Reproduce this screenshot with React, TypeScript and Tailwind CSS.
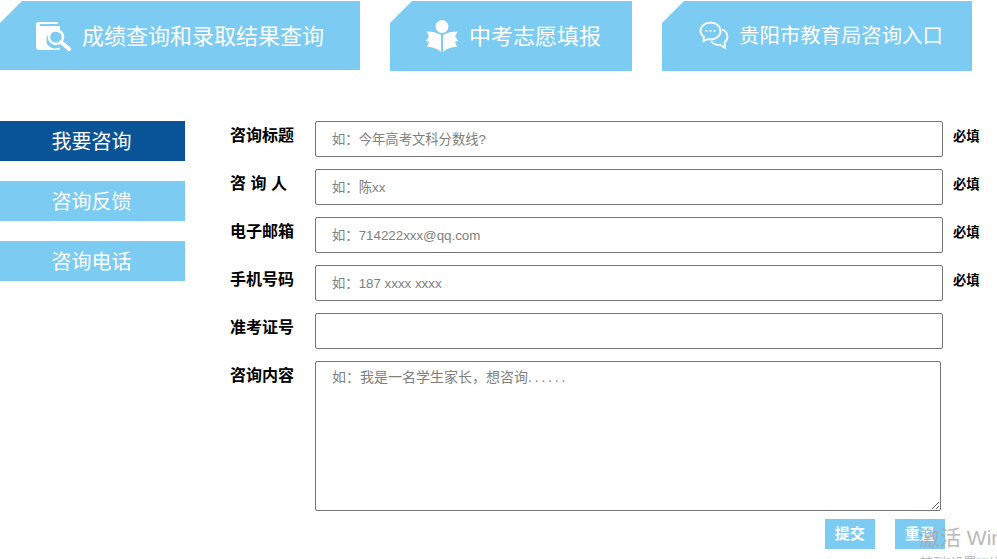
const CJK = "font-['Liberation_Sans','Noto_Sans_CJK_SC',sans-serif]";

const rows = [
  { label: "咨询标题", placeholder: "如：今年高考文科分数线?", required: true },
  { label: "咨 询 人", placeholder: "如：陈xx", required: true },
  { label: "电子邮箱", placeholder: "如：714222xxx@qq.com", required: true },
  { label: "手机号码", placeholder: "如：187 xxxx xxxx", required: true },
  { label: "准考证号", placeholder: "", required: false },
];

function SearchBookIcon() {
  return (
    <svg width="36" height="30" viewBox="0 0 36 30" fill="none">
      <path d="M2 1h20v2H4.500a1 1 0 0 0 0 2H24v7.500a8 8 0 0 0-8-1.500 8.500 8.500 0 0 0 0 16c2.500 1 5 .6 8-.5V29H3a3 3 0 0 1-3-3V3a2 2 0 0 1 2-2z" fill="#fff" />
      <circle cx="20" cy="16" r="7" stroke="#fff" strokeWidth="2.500" />
      <path d="M25 21l8 7" stroke="#fff" strokeWidth="4" strokeLinecap="round" />
    </svg>
  );
}

function ReaderIcon() {
  return (
    <svg width="32" height="32" viewBox="0 0 32 32" fill="#fff">
      <circle cx="16" cy="6.500" r="6.500" />
      <path d="M0 11.500c6 0 11 1 15 3.500v17c-3-3-8-5-14-5l2-5-3-1 3-5z" />
      <path d="M32 11.500c-6 0-11 1-15 3.500v17c3-3 8-5 14-5l-2-5 3-1-3-5z" />
    </svg>
  );
}

function ChatIcon() {
  return (
    <svg width="30" height="30" viewBox="0 0 30 30" fill="none" stroke="#fff" strokeWidth="1.800">
      <path d="M11.500 1.500c5.500 0 10 3.800 10 8.500s-4.500 8.500-10 8.500c-1 0-2-.1-3-.4L4.500 20l.4-4.200C2.900 14.300 1.500 12.300 1.500 10c0-4.700 4.500-8.500 10-8.500z" />
      <path d="M23 8.500c3.300 1.200 5.500 4 5.500 7.200 0 2.300-1.100 4.300-2.900 5.700l.6 5.600-5.200-3.300c-3.700.4-7-1-8.800-3.500" />
      <circle cx="7.500" cy="10" r="1" fill="#fff" stroke="none" />
      <circle cx="11.500" cy="10" r="1" fill="#fff" stroke="none" />
      <circle cx="15.500" cy="10" r="1" fill="#fff" stroke="none" />
    </svg>
  );
}

export default function App() {
  return (
    <div className={`relative h-[559px] w-[997px] overflow-hidden bg-white ${CJK}`}>
      {/* top entrance tabs */}
      <div className="flex items-start gap-[30px] pt-px">
        <a className="flex h-[69px] w-[360px] items-center bg-[#7bcbf3] pl-[36px] [clip-path:polygon(22px_0,100%_0,100%_100%,0_100%,0_22px)]">
          <SearchBookIcon />
          <span className="ml-[10px] pt-px text-[22px] text-white">成绩查询和录取结果查询</span>
        </a>
        <a className="flex h-[70px] w-[242px] items-center bg-[#7bcbf3] pl-[36px] [clip-path:polygon(22px_0,100%_0,100%_100%,0_100%,0_22px)]">
          <ReaderIcon />
          <span className="ml-[12px] -translate-x-px pt-px text-[22px] text-white">中考志愿填报</span>
        </a>
        <a className="flex h-[70px] w-[310px] items-center bg-[#7bcbf3] pl-[37px] [clip-path:polygon(22px_0,100%_0,100%_100%,0_100%,0_22px)]">
          <ChatIcon />
          <span className="ml-[10px] pt-px text-[20.400px] text-white">贵阳市教育局咨询入口</span>
        </a>
      </div>

      <div className="mt-[50px] flex">
        {/* side menu */}
        <div className="flex w-[185px] flex-col gap-[20px]">
          <div className="flex h-[40px] items-center justify-center bg-[#095496] pt-px pr-[2px] text-[20px] text-white">我要咨询</div>
          <div className="flex h-[40px] items-center justify-center bg-[#7bcbf3] pt-px pr-[2px] text-[20px] text-white">咨询反馈</div>
          <div className="flex h-[40px] items-center justify-center bg-[#7bcbf3] pt-px pr-[2px] text-[20px] text-white">咨询电话</div>
        </div>

        {/* form */}
        <div className="ml-[45px] flex flex-col">
          {rows.map((row) => (
            <div key={row.label} className="mb-[12px] flex h-[36px]">
              <label className="w-[85px] text-[16px] leading-[30px] font-bold whitespace-pre text-black">{row.label}</label>
              <input
                placeholder={row.placeholder}
                className="h-[36px] w-[628px] rounded-[2px] border border-[#767676] pl-[16px] text-[13.330px] text-black outline-none placeholder:text-[#808080]"
              />
              {row.required && <span className="ml-[10px] text-[13.330px] leading-[32px] font-bold text-black">必填</span>}
            </div>
          ))}
          <div className="flex">
            <label className="w-[85px] text-[16px] leading-[30px] font-bold text-black">咨询内容</label>
            <textarea
              placeholder={"如：我是一名学生家长，想咨询.\u2009.\u2009.\u2009.\u2009.\u2009."}
              className="h-[150px] w-[626px] rounded-[2px] border border-[#767676] px-[16px] py-[6px] text-[14px] leading-[18px] text-black outline-none placeholder:text-[#808080]"
            />
          </div>
          <div className="mt-[8px] flex justify-end gap-[20px] pr-[35px]">
            <button className="h-[30px] w-[50px] bg-[#7bcbf3] text-[15px] font-bold text-white">提交</button>
            <button className="h-[30px] w-[50px] bg-[#7bcbf3] text-[15px] font-bold text-white">重置</button>
          </div>
        </div>
      </div>

      {/* windows activation watermark */}
      <div className="absolute top-[524px] left-[919px] text-[21px] leading-[28px] whitespace-nowrap text-[#a6a6a6]/80">激活 Windows</div>
      <div className="absolute top-[555px] left-[920px] text-[13px] leading-[16px] whitespace-nowrap text-[#a6a6a6]/80">转到"设置"以激活 Windows</div>
    </div>
  );
}
